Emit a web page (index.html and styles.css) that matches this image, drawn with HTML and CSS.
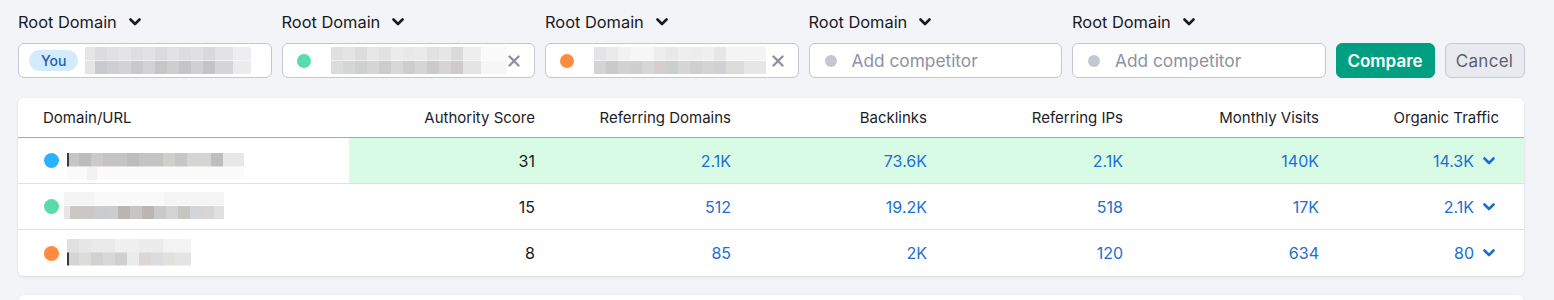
FILE: index.html
```html
<!DOCTYPE html>
<html lang="en">
<head>
<meta charset="utf-8">
<title>Compare domains</title>
<link rel="stylesheet" href="styles.css">
</head>
<body>
<div class="toolbar">
  <div class="field">
    <div class="label">Root Domain <svg class="chev" viewBox="0 0 12 8"><path d="M1.5 1.5 6 6l4.5-4.5"/></svg></div>
    <div class="input"><span class="you">You</span><span class="blur blur-a"></span></div>
  </div>
  <div class="field">
    <div class="label">Root Domain <svg class="chev" viewBox="0 0 12 8"><path d="M1.5 1.5 6 6l4.5-4.5"/></svg></div>
    <div class="input"><span class="dot green"></span><span class="blur blur-b"></span><svg class="close" viewBox="0 0 12 12"><path d="M1.5 1.5l9 9M10.5 1.5l-9 9"/></svg></div>
  </div>
  <div class="field">
    <div class="label">Root Domain <svg class="chev" viewBox="0 0 12 8"><path d="M1.5 1.5 6 6l4.5-4.5"/></svg></div>
    <div class="input"><span class="dot orange"></span><span class="blur blur-c"></span><svg class="close" viewBox="0 0 12 12"><path d="M1.5 1.5l9 9M10.5 1.5l-9 9"/></svg></div>
  </div>
  <div class="field">
    <div class="label">Root Domain <svg class="chev" viewBox="0 0 12 8"><path d="M1.5 1.5 6 6l4.5-4.5"/></svg></div>
    <div class="input"><span class="dot grey"></span><span class="placeholder">Add competitor</span></div>
  </div>
  <div class="field">
    <div class="label">Root Domain <svg class="chev" viewBox="0 0 12 8"><path d="M1.5 1.5 6 6l4.5-4.5"/></svg></div>
    <div class="input"><span class="dot grey"></span><span class="placeholder">Add competitor</span></div>
  </div>
  <button class="btn primary">Compare</button>
  <button class="btn secondary">Cancel</button>
</div>

<div class="card">
  <div class="row head">
    <div class="cell first">Domain/URL</div>
    <div class="cell">Authority Score</div>
    <div class="cell">Referring Domains</div>
    <div class="cell">Backlinks</div>
    <div class="cell">Referring IPs</div>
    <div class="cell">Monthly Visits</div>
    <div class="cell last">Organic Traffic</div>
  </div>
  <div class="row hl">
    <div class="cell first"><span class="dot blue"></span><span class="blur blur-r1"></span></div>
    <div class="cell num dark">31</div>
    <div class="cell num">2.1K</div>
    <div class="cell num">73.6K</div>
    <div class="cell num">2.1K</div>
    <div class="cell num">140K</div>
    <div class="cell num last">14.3K <svg class="chev small" viewBox="0 0 12 8"><path d="M1.5 1.5 6 6l4.5-4.5"/></svg></div>
  </div>
  <div class="row">
    <div class="cell first"><span class="dot green"></span><span class="blur blur-r2"></span></div>
    <div class="cell num dark">15</div>
    <div class="cell num">512</div>
    <div class="cell num">19.2K</div>
    <div class="cell num">518</div>
    <div class="cell num">17K</div>
    <div class="cell num last">2.1K <svg class="chev small" viewBox="0 0 12 8"><path d="M1.5 1.5 6 6l4.5-4.5"/></svg></div>
  </div>
  <div class="row">
    <div class="cell first"><span class="dot orange"></span><span class="blur blur-r3"></span></div>
    <div class="cell num dark">8</div>
    <div class="cell num">85</div>
    <div class="cell num">2K</div>
    <div class="cell num">120</div>
    <div class="cell num">634</div>
    <div class="cell num last">80 <svg class="chev small" viewBox="0 0 12 8"><path d="M1.5 1.5 6 6l4.5-4.5"/></svg></div>
  </div>
</div>

<div class="card next"></div>
</body>
</html>
```

FILE: styles.css
```css
* { box-sizing: border-box; }

html, body {
  margin: 0;
  background: #f3f4f8;
  font-family: Inter, "Noto Sans", "Liberation Sans", sans-serif;
  color: #171a22;
}

body { padding: 10px 18px 0; }

.toolbar {
  display: flex;
  align-items: flex-end;
  gap: 10px;
}

.field {
  width: 253.5px;
  display: flex;
  flex-direction: column;
  gap: 9px;
}

.label {
  height: 24px;
  display: flex;
  align-items: center;
  gap: 12px;
  font-size: 16.4px;
  line-height: 24px;
}

.chev {
  width: 12px;
  height: 8px;
  fill: none;
  stroke: #171a22;
  stroke-width: 2.6;
  stroke-linecap: round;
  stroke-linejoin: round;
}

.chev.small { stroke: #1a6fd0; margin-left: 9px; }

.input {
  height: 35px;
  background: #fff;
  border: 1px solid #c4c7cf;
  border-radius: 6px;
  display: flex;
  align-items: center;
  padding: 0 12px 0 14px;
  position: relative;
}

.you {
  background: #d2ebff;
  color: #1a5fab;
  font-size: 14px;
  font-weight: 500;
  border-radius: 11px;
  height: 21px;
  line-height: 21px;
  padding: 0 12px;
  margin-left: -4px;
}

.dot {
  width: 14px;
  height: 14px;
  border-radius: 50%;
  flex: none;
}
.dot.green { background: #59dcab; }
.dot.orange { background: #ff8b40; }
.dot.blue { background: #2bb2ff; }
.dot.grey { background: #c5c7d0; width: 12px; height: 12px; margin-left: 1px; }

.placeholder {
  margin-left: 15px;
  font-size: 17.3px;
  color: #8d91a0;
}

.close {
  width: 12px;
  height: 12px;
  margin-left: auto;
  margin-right: 2px;
  fill: none;
  stroke: #8f929c;
  stroke-width: 2.4;
  stroke-linecap: round;
}

/* pixelated (redacted) domain names */
.blur {
  display: block;
  height: 27px;
  flex: none;
}
.blur-a {
  width: 166px;
  margin-left: 7px;
  background:
    linear-gradient(90deg, #e6e6e9 0 10px, #dcdce0 10px 22px, #e1e1e4 22px 34px, #e4e4e7 34px 46px, #dddde2 46px 58px, #e2e2e6 58px 70px, #dadadf 70px 82px, #e1e1e6 82px 94px, #dcdce0 94px 106px, #e0e0e3 106px 118px, #d9d9dc 118px 130px, #e3e3e6 130px 148px, #eeeef0 148px 166px) 0 0 / 100% 50% no-repeat,
    linear-gradient(90deg, #e4e4e6 0 10px, #c8c9d2 10px 22px, #cfcfd3 22px 34px, #d3d3d6 34px 46px, #c9c9cd 46px 58px, #d2d2d5 58px 70px, #c6c6ca 70px 82px, #cecece 82px 94px, #c5c5c9 94px 106px, #d0d0d3 106px 118px, #c4c4c7 118px 130px, #d6d6d8 130px 148px, #ececee 148px 166px) 0 100% / 100% 50% no-repeat;
}
.blur-b {
  width: 176px;
  margin-left: 20px;
  background:
    linear-gradient(90deg, #e0e0e0 0 12px, #e4e4e4 12px 24px, #dcdcdc 24px 36px, #e7e7e7 36px 48px, #e2e2e2 48px 60px, #ececec 60px 72px, #e8e8e8 72px 84px, #eaeaea 84px 96px, #e1e1e1 96px 108px, #e6e6e6 108px 120px, #dadada 120px 132px, #eeeeee 132px 150px, #fafafa 150px 176px) 0 0 / 100% 50% no-repeat,
    linear-gradient(90deg, #dcdcdc 0 12px, #d4d7d5 12px 24px, #cfd1cf 24px 36px, #d6d6d6 36px 48px, #cccccc 48px 60px, #d8d8d8 60px 72px, #cdcdcd 72px 84px, #d5d5d5 84px 96px, #cbcbcb 96px 108px, #d8d4d4 108px 120px, #cfcbcb 120px 132px, #e4e4e4 132px 150px, #f6f6f6 150px 176px) 0 100% / 100% 50% no-repeat;
}
.blur-c {
  width: 172px;
  margin-left: 20px;
  background:
    linear-gradient(90deg, #e4e4e6 0 12px, #eaeaea 12px 24px, #f2f2f2 24px 36px, #f6f6f6 36px 60px, #ededed 60px 72px, #e8e8e8 72px 84px, #eeeeee 84px 96px, #ececec 96px 108px, #f0f0f0 108px 120px, #e7e7e7 120px 132px, #f4f4f4 132px 172px) 0 0 / 100% 50% no-repeat,
    linear-gradient(90deg, #d4d4d6 0 12px, #cacaca 12px 24px, #d2d2d2 24px 36px, #cfcfcf 36px 48px, #d6d6d6 48px 60px, #d4cfcc 60px 72px, #cbcfcc 72px 84px, #d6d6d6 84px 96px, #cfcfcf 96px 108px, #d4d4d4 108px 120px, #cfd1d4 120px 132px, #dcdcdc 132px 150px, #e6e6e6 150px 172px) 0 100% / 100% 50% no-repeat;
}

.btn {
  height: 35px;
  border-radius: 6px;
  font-family: inherit;
  font-size: 17px;
  padding: 0;
  cursor: pointer;
}
.btn.primary {
  background: #009f81;
  border: 1px solid #009f81;
  color: #fff;
  font-weight: 600;
  width: 99px;
}
.btn.secondary {
  background: #e9eaf0;
  border: 1px solid #c6c8d0;
  color: #5b5f6e;
  letter-spacing: 0.3px;
  width: 80px;
}

.card {
  width: 1506px;
  margin-top: 20px;
  background: #fff;
  border-radius: 6px;
  box-shadow: 0 1px 3px rgba(24, 28, 40, 0.12);
  overflow: hidden;
}

.row {
  display: grid;
  grid-template-columns: 331px repeat(5, 196px) 1fr;
  height: 46px;
  border-bottom: 1px solid #e0e1e8;
}
.row:last-child { border-bottom: 0; height: 46px; }

.row.head {
  height: 40px;
  border-bottom: 1px solid #a5a8b4;
}

.cell {
  display: flex;
  align-items: center;
  justify-content: flex-end;
  padding-right: 10px;
  font-size: 15px;
  color: #1b1d27;
}
.cell.first {
  justify-content: flex-start;
  padding-left: 25px;
}
.cell.last { padding-right: 25px; }
.cell.num { font-size: 16px; color: #1a6fd0; }
.cell.num.dark { color: #171a22; }
.row.hl .cell.num { background: #d8fbe5; }
.row .cell.num.last { padding-right: 29px; }

.row .dot { width: 15px; height: 15px; margin-left: 1px; }

.blur-r1 {
  width: 177px;
  margin-left: 8px;
  margin-top: 12px;
  background:
    linear-gradient(90deg, #3a3a3a 0 2px, #c7c5c4 2px 12px, #bcbcbc 12px 24px, #cdc9c8 24px 36px, #c4c4c4 36px 60px, #bfbdbc 60px 72px, #c4c4c4 72px 96px, #cfcfcb 96px 108px, #c6c6c9 108px 120px, #d4d4d2 120px 144px, #bebebe 144px 156px, #e8e8e8 156px 177px) 0 0 / 100% 50% no-repeat,
    linear-gradient(90deg, #fafafa 0 20px, #f2f2f2 20px 30px, #fbfbfb 30px 177px) 0 100% / 100% 50% no-repeat;
}
.blur-r2 {
  width: 160px;
  margin-left: 5px;
  margin-top: -2px;
  background:
    linear-gradient(90deg, #f4f4f4 0 30px, #f9f9f9 30px 100px, #f5f5f5 100px 160px) 0 0 / 100% 50% no-repeat,
    linear-gradient(90deg, #e6e6e6 0 6px, #ccc6c5 6px 30px, #c9cbcd 30px 42px, #cccccc 42px 54px, #b9b6b2 54px 66px, #c6c4c4 66px 78px, #bbb6b4 78px 90px, #cacacc 90px 102px, #d4d4d4 102px 114px, #c8c6c2 114px 126px, #d3d6d8 126px 138px, #d6d7d4 138px 150px, #e0e0e0 150px 160px) 0 100% / 100% 50% no-repeat;
}
.blur-r3 {
  width: 124px;
  margin-left: 8px;
  margin-top: -2px;
  background:
    linear-gradient(90deg, #e0e0e0 0 12px, #e6e6e6 12px 24px, #eaeaea 24px 48px, #f0f0f0 48px 72px, #ececec 72px 96px, #f3f3f3 96px 124px) 0 0 / 100% 50% no-repeat,
    linear-gradient(90deg, #3a3a3a 0 2px, #d4d4d4 2px 12px, #dcdcd8 12px 24px, #cfd2cf 24px 36px, #d8d8d8 36px 48px, #d0d0d0 48px 60px, #ececec 60px 72px, #dcd6d4 72px 84px, #dadcde 84px 96px, #e0e0dc 96px 108px, #e4e4e4 108px 124px) 0 100% / 100% 50% no-repeat;
}

.card.next {
  height: 40px;
  margin-top: 19px;
}
```
